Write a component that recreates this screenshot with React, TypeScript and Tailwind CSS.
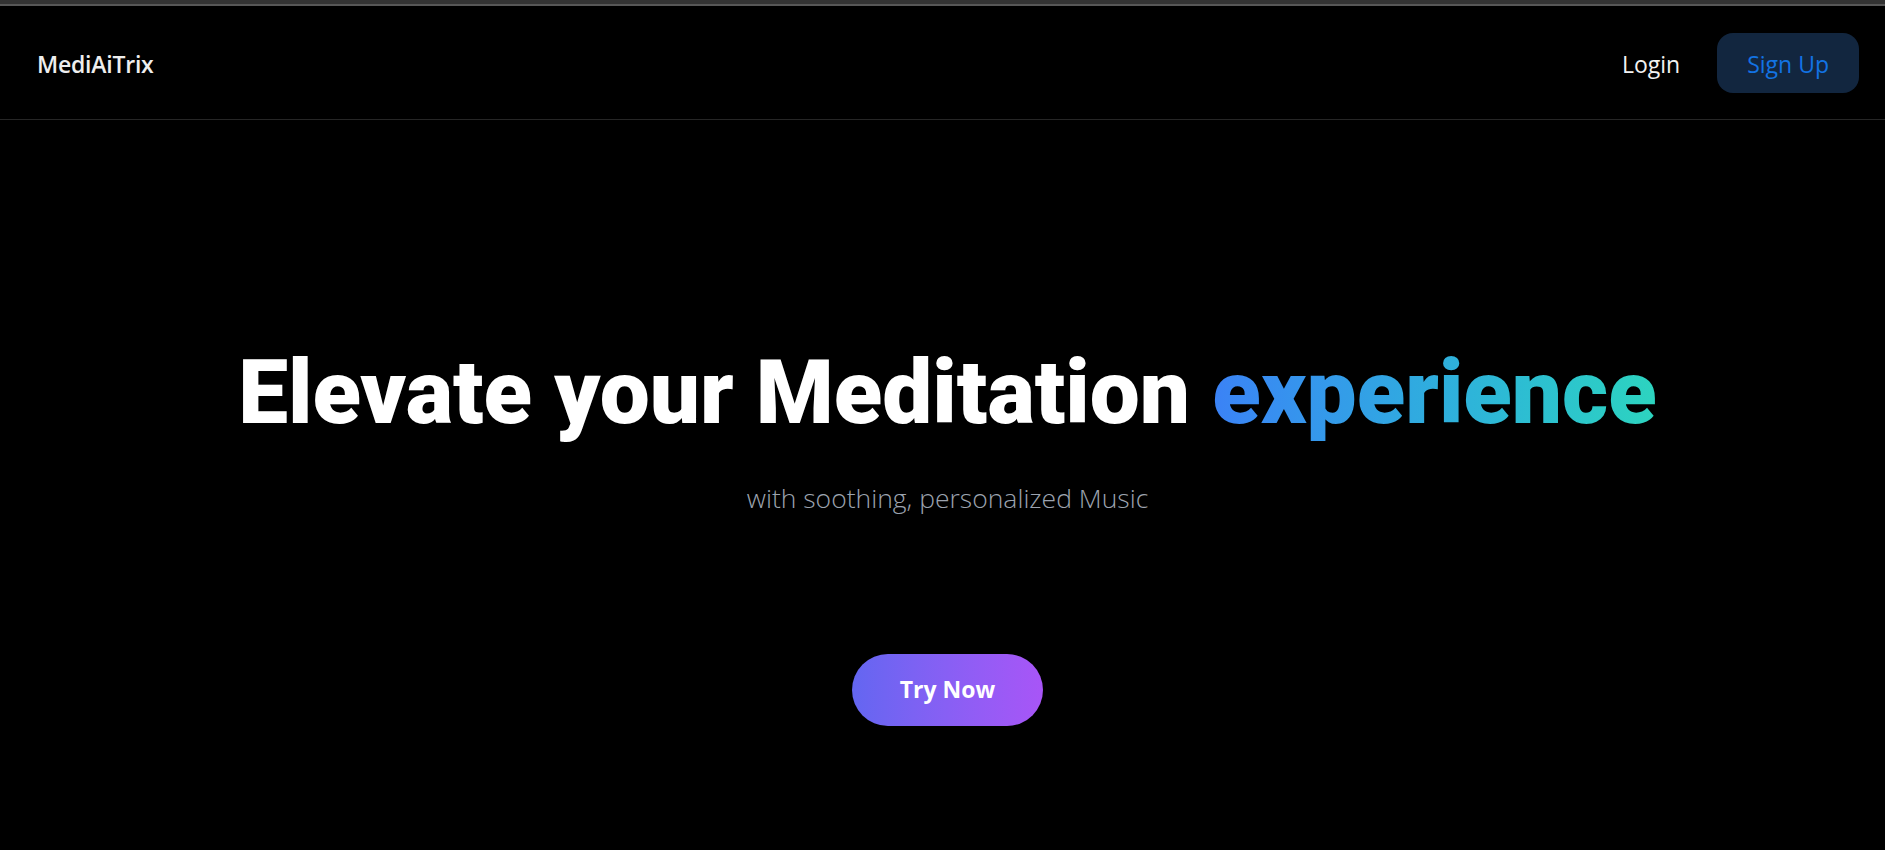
import { useState } from "react";

export default function App() {
  const [clicks, setClicks] = useState(0);

  return (
    <div className="min-h-screen bg-black font-['Open_Sans',sans-serif] text-white">
      {/* window edge strip seen at the top of the capture */}
      <div className="h-1 bg-[#333333]" />
      <div className="h-[2px] bg-[#575757]" />

      <header className="flex h-[114px] items-center justify-between border-b border-[#262626] pl-[37px] pr-[26px]">
        <a href="#" className="pt-[3px] text-[23px] font-semibold tracking-[-0.01em] text-[#eeeeee]">
          MediAiTrix
        </a>
        <nav className="flex items-center gap-[37px]">
          <button className="pt-[3px] text-[23px] text-[#f2f2f2]">Login</button>
          <button className="h-[60px] rounded-2xl bg-[#12263f] px-[30px] pt-[3px] text-[23px] text-[#1273e4]">
            Sign Up
          </button>
        </nav>
      </header>

      <main className="flex flex-col items-center pt-[224px] pl-[10px]">
        <h1 className="font-['Roboto',sans-serif] text-[89px] leading-[1.1] font-black">
          Elevate your Meditation{" "}
          <span className="bg-gradient-to-r from-[#3b82f6] to-[#2dd4bf] bg-clip-text text-transparent">
            experience
          </span>
        </h1>
        <p className="mt-[37px] text-[26.5px] font-light text-[#9ca3af]">
          with soothing, personalized Music
        </p>
        <button
          onClick={() => setClicks(clicks + 1)}
          className="mt-[135px] h-[72px] w-[191px] rounded-full bg-gradient-to-r from-[#6366f1] to-[#a855f7] text-[23px] font-bold"
        >
          Try Now
        </button>
      </main>
    </div>
  );
}
